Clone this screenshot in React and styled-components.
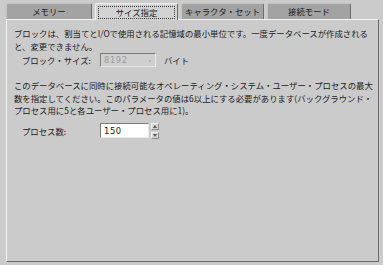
import React from 'react';
import styled, { createGlobalStyle } from 'styled-components';

const GlobalStyle = createGlobalStyle`
  html, body {
    margin: 0;
    padding: 0;
    background: #cbcbcb;
  }
  body {
    font-family: "Noto Sans CJK JP", "Noto Sans", sans-serif;
    font-size: 8.4px;
    color: #1a1a1a;
  }
`;

const Frame = styled.div`
  width: 383px;
  height: 265px;
  box-sizing: border-box;
  padding: 3px 4px 3px 6px;
  display: flex;
  flex-direction: column;
`;

const TabBar = styled.div`
  display: flex;
  gap: 3px;
  height: 16px;
  align-items: flex-end;
`;

const Tab = styled.div`
  width: ${p => p.$w}px;
  height: ${p => (p.$active ? 17 : 16)}px;
  box-sizing: border-box;
  display: flex;
  align-items: center;
  justify-content: center;
  white-space: nowrap;
  background: ${p => (p.$active ? '#d2d2d2' : '#a3a3a3')};
  border-top: 1px solid ${p => (p.$active ? '#f2f2f2' : '#c4c4c4')};
  border-left: 1px solid ${p => (p.$active ? '#f2f2f2' : '#c4c4c4')};
  border-right: 1px solid #6e6e6e;
  border-radius: 2px 2px 0 0;
  margin-bottom: ${p => (p.$active ? -1 : 0)}px;
  position: relative;
  z-index: ${p => (p.$active ? 1 : 0)};
  padding: 1px 2px;
`;

const TabLabel = styled.span`
  flex: 1;
  text-align: center;
  line-height: 11px;
  border: 1px dotted ${p => (p.$focus ? '#333' : 'transparent')};
`;

const Panel = styled.div`
  flex: 1;
  box-sizing: border-box;
  background: #cbcbcb;
  border-top: 1px solid #f4f4f4;
  border-left: 1px solid #f4f4f4;
  border-right: 1px solid #6a6a6a;
  border-bottom: 1px solid #6a6a6a;
  padding: 7px 4px 0 7px;
`;

const Para = styled.p`
  margin: ${p => p.$mt || 0}px 0 0 0;
  line-height: 12.5px;
  white-space: nowrap;
`;

const Row = styled.div`
  display: flex;
  align-items: center;
  margin-top: ${p => p.$mt}px;
  padding-left: 8px;
  white-space: nowrap;
`;

const Label = styled.span`
  width: 78px;
`;

const Field = styled.div`
  width: ${p => p.$w}px;
  height: ${p => p.$h}px;
  box-sizing: border-box;
  display: flex;
  align-items: center;
  padding-left: 3px;
  background: ${p => (p.$disabled ? '#cfcfcf' : '#ffffff')};
  color: ${p => (p.$disabled ? '#9a9a9a' : '#1a1a1a')};
  border-top: 1px solid #7a7a7a;
  border-left: 1px solid #7a7a7a;
  border-right: 1px solid #e8e8e8;
  border-bottom: 1px solid #e8e8e8;
  font-family: "DejaVu Sans", sans-serif;
  font-size: 8.4px;
  letter-spacing: 0.6px;
`;

const Arrow = styled.span`
  margin-left: auto;
  margin-right: 3px;
  color: #b5b5b5;
  font-size: 6px;
`;

const Unit = styled.span`
  margin-left: 8px;
`;

const Spinner = styled.div`
  display: flex;
  flex-direction: column;
  margin-left: 2px;
  height: 16px;
  justify-content: space-between;
`;

const SpinButton = styled.div`
  width: 8px;
  height: 7px;
  box-sizing: border-box;
  background: #d6d6d6;
  border: 1px solid #8a8a8a;
  border-top-color: #f0f0f0;
  border-left-color: #f0f0f0;
  display: flex;
  align-items: center;
  justify-content: center;
`;

const Tri = ({ up }) => (
  <svg width="4" height="3" viewBox="0 0 4 3">
    <path d={up ? 'M0 3 L2 0 L4 3 Z' : 'M0 0 L2 3 L4 0 Z'} fill="#555" />
  </svg>
);

const tabs = [
  { label: 'メモリー', w: 86 },
  { label: 'サイズ指定', w: 83, active: true },
  { label: 'キャラクタ・セット', w: 83 },
  { label: '接続モード', w: 84 },
];

export default function App() {
  return (
    <>
      <GlobalStyle />
      <Frame>
        <TabBar>
          {tabs.map(t => (
            <Tab key={t.label} $w={t.w} $active={t.active}>
              <TabLabel $focus={t.active}>{t.label}</TabLabel>
            </Tab>
          ))}
        </TabBar>
        <Panel>
          <Para>
            ブロックは、割当てとI/Oで使用される記憶域の最小単位です。一度データベースが作成される<br />
            と、変更できません。
          </Para>
          <Row $mt={1}>
            <Label>ブロック・サイズ:</Label>
            <Field $w={56} $h={14} $disabled>
              8192<Arrow>▾</Arrow>
            </Field>
            <Unit>バイト</Unit>
          </Row>
          <Para $mt={12}>
            このデータベースに同時に接続可能なオペレーティング・システム・ユーザー・プロセスの最大<br />
            数を指定してください。このパラメータの値は6以上にする必要があります(バックグラウンド・<br />
            プロセス用に5と各ユーザー・プロセス用に1)。
          </Para>
          <Row $mt={6}>
            <Label>プロセス数:</Label>
            <Field $w={49} $h={15}>150</Field>
            <Spinner>
              <SpinButton><Tri up /></SpinButton>
              <SpinButton><Tri /></SpinButton>
            </Spinner>
          </Row>
        </Panel>
      </Frame>
    </>
  );
}
